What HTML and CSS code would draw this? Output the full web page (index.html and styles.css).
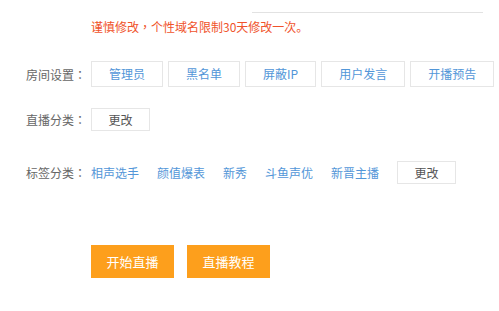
FILE: index.html
```html
<!DOCTYPE html>
<html lang="zh-CN">
<head>
<meta charset="utf-8">
<link rel="stylesheet" href="styles.css">
</head>
<body>
<div class="page">
  <div class="domain-line"></div>
  <p class="notice">谨慎修改<span class="punct" lang="zh-TW">，</span>个性域名限制30天修改一次。</p>

  <div class="row row-settings">
    <span class="label">房间设置<span class="punct" lang="zh-TW">：</span></span>
    <div class="btn-group">
      <a class="btn btn-blue">管理员</a>
      <a class="btn btn-blue">黑名单</a>
      <a class="btn btn-blue">屏蔽IP</a>
      <a class="btn btn-blue">用户发言</a>
      <a class="btn btn-blue">开播预告</a>
      <a class="btn btn-blue">房间公告</a>
    </div>
  </div>

  <div class="row row-category">
    <span class="label">直播分类<span class="punct" lang="zh-TW">：</span></span>
    <a class="btn btn-small">更改</a>
  </div>

  <div class="row row-tags">
    <span class="label">标签分类<span class="punct" lang="zh-TW">：</span></span>
    <div class="tags">
      <span class="tag">相声选手</span>
      <span class="tag">颜值爆表</span>
      <span class="tag">新秀</span>
      <span class="tag">斗鱼声优</span>
      <span class="tag">新晋主播</span>
      <a class="btn btn-small">更改</a>
    </div>
  </div>

  <div class="actions">
    <a class="btn-orange">开始直播</a>
    <a class="btn-orange">直播教程</a>
  </div>
</div>
</body>
</html>
```
FILE: styles.css
```css
html, body {
  margin: 0;
  padding: 0;
  background: #fff;
  overflow: hidden;
}
body {
  font-family: "Noto Sans CJK SC", "Noto Sans", sans-serif;
  font-size: 12px;
  color: #666;
}
.page {
  width: 499px;
  height: 311px;
  padding-left: 26px;
  box-sizing: border-box;
  overflow: hidden;
}
.domain-line {
  margin-left: 226px;
  width: 231px;
  height: 12px;
  border-bottom: 1px solid #e2e2e2;
}
.notice {
  margin: 5px 0 0 65px;
  line-height: 18px;
  color: #f0532b;
  white-space: nowrap;
}
.punct {
  font-family: "Noto Sans CJK TC", sans-serif;
}
.row {
  display: flex;
  align-items: center;
}
.label {
  width: 65px;
  flex: none;
  color: #666;
  white-space: nowrap;
}
.row-settings { margin-top: 25px; }
.row-category { margin-top: 21px; }
.row-tags { margin-top: 30px; }
.btn-group {
  display: flex;
  gap: 5px;
  flex: none;
}
.btn {
  display: block;
  box-sizing: border-box;
  border: 1px solid #e6e6e6;
  background: #fff;
  text-align: center;
  white-space: nowrap;
  flex: none;
}
.btn-blue {
  height: 26px;
  line-height: 24px;
  padding: 0 17px;
  color: #5296d8;
}
.btn-small {
  width: 59px;
  height: 23px;
  line-height: 21px;
  color: #555;
}
.tags {
  display: flex;
  align-items: center;
  gap: 18px;
}
.tag {
  color: #5296d8;
  white-space: nowrap;
}
.actions {
  margin-top: 61px;
  padding-left: 65px;
  display: flex;
  gap: 13px;
}
.btn-orange {
  display: block;
  width: 83px;
  height: 33px;
  line-height: 33px;
  text-align: center;
  background: #fd9f1c;
  color: #fff;
  font-size: 13px;
}
```
